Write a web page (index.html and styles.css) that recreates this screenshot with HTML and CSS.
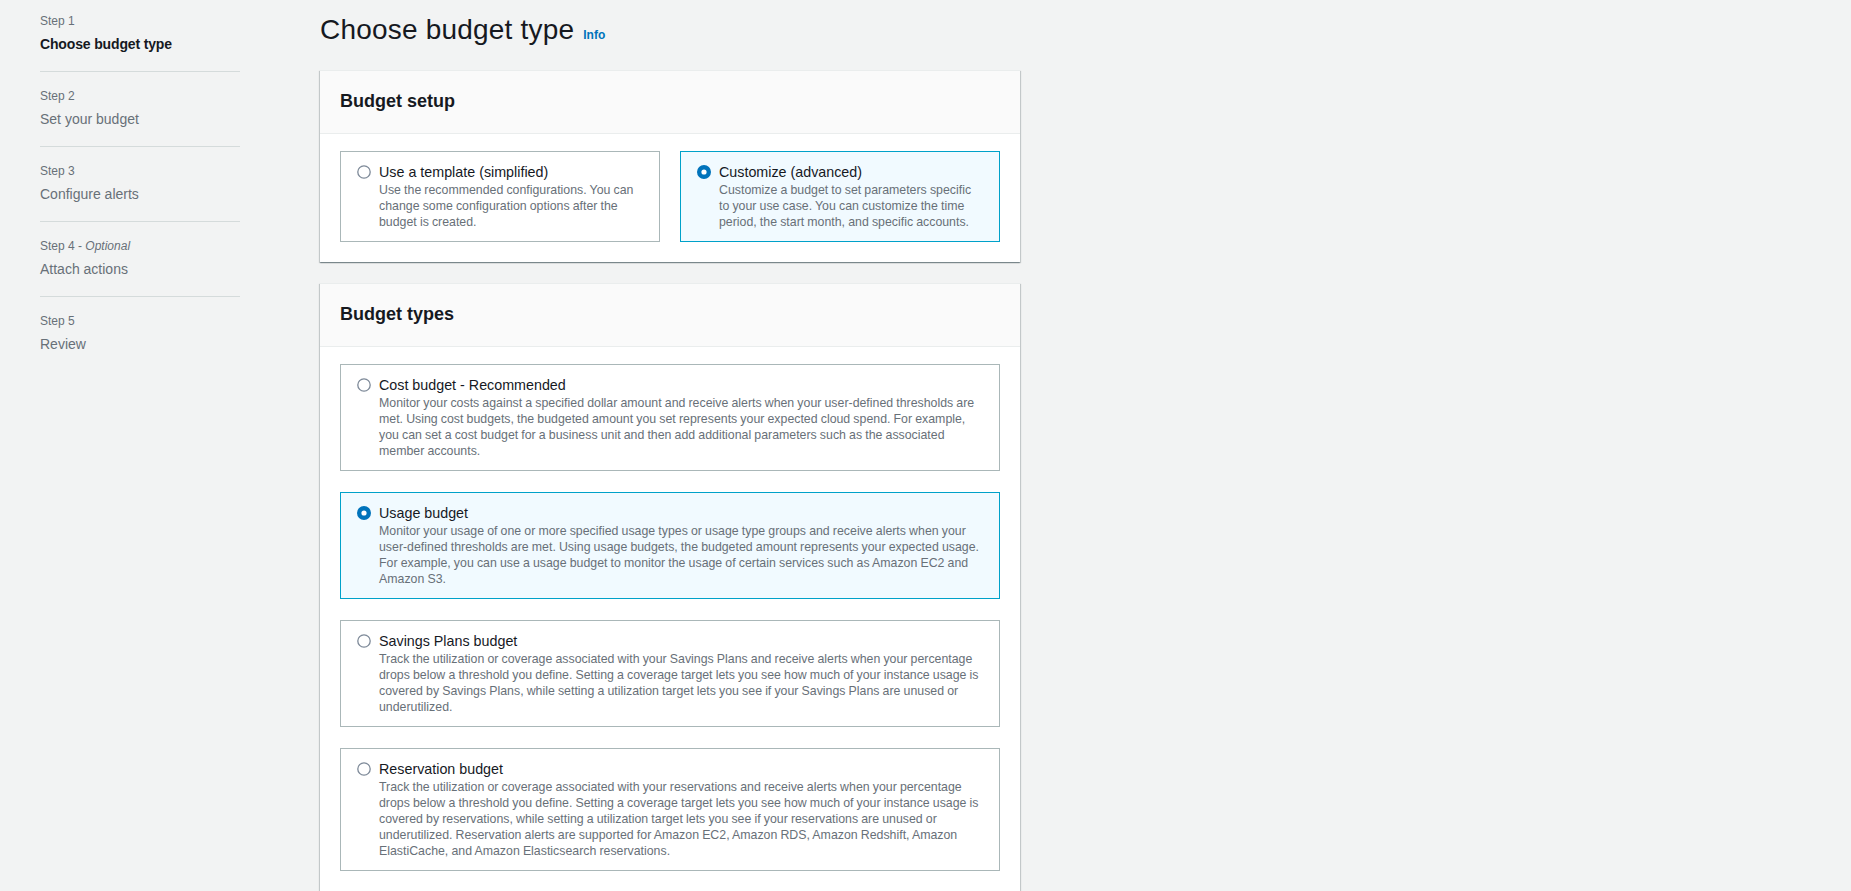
FILE: index.html
```html
<!DOCTYPE html>
<html lang="en">
<head>
<meta charset="utf-8">
<title>Choose budget type</title>
<link rel="stylesheet" href="styles.css">
</head>
<body>
<div class="layout">
  <nav class="steps">
    <ol class="step-list">
      <li class="step">
        <div class="step-label">Step 1</div>
        <div class="step-title active">Choose budget type</div>
      </li>
      <li class="step">
        <div class="step-label">Step 2</div>
        <div class="step-title">Set your budget</div>
      </li>
      <li class="step">
        <div class="step-label">Step 3</div>
        <div class="step-title">Configure alerts</div>
      </li>
      <li class="step">
        <div class="step-label">Step 4 - <i>Optional</i></div>
        <div class="step-title">Attach actions</div>
      </li>
      <li class="step last">
        <div class="step-label">Step 5</div>
        <div class="step-title">Review</div>
      </li>
    </ol>
  </nav>

  <main class="main">
    <h1 class="page-title">Choose budget type<a class="info" href="#">Info</a></h1>

    <section class="panel">
      <header class="panel-header"><h2>Budget setup</h2></header>
      <div class="panel-body">
        <div class="tiles two">
          <label class="tile">
            <span class="radio"><svg width="14" height="14" viewBox="0 0 14 14"><circle cx="7" cy="7" r="6.2" fill="#fff" stroke="#7d8998" stroke-width="1.3"/></svg></span>
            <span class="tile-text">
              <span class="tile-label">Use a template (simplified)</span>
              <span class="tile-desc">Use the recommended configurations. You can change some configuration options after the budget is created.</span>
            </span>
          </label>
          <label class="tile selected">
            <span class="radio"><svg width="14" height="14" viewBox="0 0 14 14"><circle cx="7" cy="7" r="4.8" fill="#fff" stroke="#0073bb" stroke-width="4.4"/></svg></span>
            <span class="tile-text">
              <span class="tile-label">Customize (advanced)</span>
              <span class="tile-desc">Customize a budget to set parameters specific to your use case. You can customize the time period, the start month, and specific accounts.</span>
            </span>
          </label>
        </div>
      </div>
    </section>

    <section class="panel">
      <header class="panel-header"><h2>Budget types</h2></header>
      <div class="panel-body">
        <div class="tiles one">
          <label class="tile">
            <span class="radio"><svg width="14" height="14" viewBox="0 0 14 14"><circle cx="7" cy="7" r="6.2" fill="#fff" stroke="#7d8998" stroke-width="1.3"/></svg></span>
            <span class="tile-text">
              <span class="tile-label">Cost budget - Recommended</span>
              <span class="tile-desc">Monitor your costs against a specified dollar amount and receive alerts when your user-defined thresholds are met. Using cost budgets, the budgeted amount you set represents your expected cloud spend. For example, you can set a cost budget for a business unit and then add additional parameters such as the associated member accounts.</span>
            </span>
          </label>
          <label class="tile selected">
            <span class="radio"><svg width="14" height="14" viewBox="0 0 14 14"><circle cx="7" cy="7" r="4.8" fill="#fff" stroke="#0073bb" stroke-width="4.4"/></svg></span>
            <span class="tile-text">
              <span class="tile-label">Usage budget</span>
              <span class="tile-desc">Monitor your usage of one or more specified usage types or usage type groups and receive alerts when your user-defined thresholds are met. Using usage budgets, the budgeted amount represents your expected usage. For example, you can use a usage budget to monitor the usage of certain services such as Amazon EC2 and Amazon S3.</span>
            </span>
          </label>
          <label class="tile">
            <span class="radio"><svg width="14" height="14" viewBox="0 0 14 14"><circle cx="7" cy="7" r="6.2" fill="#fff" stroke="#7d8998" stroke-width="1.3"/></svg></span>
            <span class="tile-text">
              <span class="tile-label">Savings Plans budget</span>
              <span class="tile-desc">Track the utilization or coverage associated with your Savings Plans and receive alerts when your percentage drops below a threshold you define. Setting a coverage target lets you see how much of your instance usage is covered by Savings Plans, while setting a utilization target lets you see if your Savings Plans are unused or underutilized.</span>
            </span>
          </label>
          <label class="tile">
            <span class="radio"><svg width="14" height="14" viewBox="0 0 14 14"><circle cx="7" cy="7" r="6.2" fill="#fff" stroke="#7d8998" stroke-width="1.3"/></svg></span>
            <span class="tile-text">
              <span class="tile-label">Reservation budget</span>
              <span class="tile-desc">Track the utilization or coverage associated with your reservations and receive alerts when your percentage drops below a threshold you define. Setting a coverage target lets you see how much of your instance usage is covered by reservations, while setting a utilization target lets you see if your reservations are unused or underutilized. Reservation alerts are supported for Amazon EC2, Amazon RDS, Amazon Redshift, Amazon ElastiCache, and Amazon Elasticsearch reservations.</span>
            </span>
          </label>
        </div>
      </div>
    </section>
  </main>
</div>
</body>
</html>
```

FILE: styles.css
```css
* { box-sizing: border-box; }

html, body {
  margin: 0;
  padding: 0;
  background: #f2f3f3;
  font-family: "Liberation Sans", Arial, sans-serif;
  color: #16191f;
}

.layout {
  display: flex;
  align-items: flex-start;
  gap: 80px;
  padding-left: 40px;
}

/* ---------- steps sidebar ---------- */
.steps {
  width: 200px;
  flex: 0 0 200px;
}

.step-list {
  list-style: none;
  margin: 0;
  padding: 0;
}

.step {
  padding: 16px 0 16px;
  border-bottom: 1px solid #d5dbdb;
}

.step:first-child { padding-top: 13px; }
.step.last { border-bottom: none; }

.step-label {
  font-size: 12px;
  line-height: 16px;
  color: #687078;
}

.step-title {
  margin-top: 4px;
  font-size: 14px;
  line-height: 22px;
  color: #687078;
}

.step-title.active {
  color: #16191f;
  font-weight: 700;
  letter-spacing: -0.15px;
}

/* ---------- main ---------- */
.main {
  width: 700px;
  flex: 0 0 700px;
  padding-top: 12px;
  padding-bottom: 20px;
}

.page-title {
  margin: 0 0 22px;
  font-size: 28px;
  line-height: 36px;
  font-weight: 400;
  color: #16191f;
  letter-spacing: 0.2px;
}

.info {
  margin-left: 9px;
  font-size: 12px;
  line-height: 16px;
  font-weight: 700;
  letter-spacing: 0;
  color: #0073bb;
  text-decoration: none;
}

.panel {
  background: #fff;
  border-top: 1px solid #eaeded;
  box-shadow: 0 1px 1px 0 rgba(0, 28, 36, 0.3), 1px 1px 1px 0 rgba(0, 28, 36, 0.15), -1px 1px 1px 0 rgba(0, 28, 36, 0.15);
  margin-bottom: 21px;
}

.panel-header {
  background: #fafafa;
  border-bottom: 1px solid #eaeded;
  padding: 18px 20px 20px;
}

.panel-header h2 {
  margin: 0;
  font-size: 18px;
  line-height: 24px;
  font-weight: 700;
  color: #16191f;
}

.panel-body {
  padding: 17px 20px 20px;
}

.tiles.two {
  display: grid;
  grid-template-columns: 1fr 1fr;
  gap: 20px;
}

.tiles.one {
  display: flex;
  flex-direction: column;
  gap: 21px;
}

.tile {
  display: flex;
  align-items: flex-start;
  gap: 8px;
  border: 1px solid #aab7b8;
  background: #fff;
  padding: 10px 16px 11px;
  cursor: pointer;
}

.tile.selected {
  background: #f1faff;
  border-color: #00a1c9;
}

.radio {
  flex: 0 0 14px;
  width: 14px;
  height: 14px;
  margin-top: 3px;
  display: block;
}

.radio svg { display: block; }

.tile-text {
  display: flex;
  flex-direction: column;
}

.tile-label {
  font-size: 14.3px;
  line-height: 20px;
  color: #16191f;
}

.tile-desc {
  font-size: 12.35px;
  line-height: 16px;
  word-spacing: -0.3px;
  color: #687078;
}
```
